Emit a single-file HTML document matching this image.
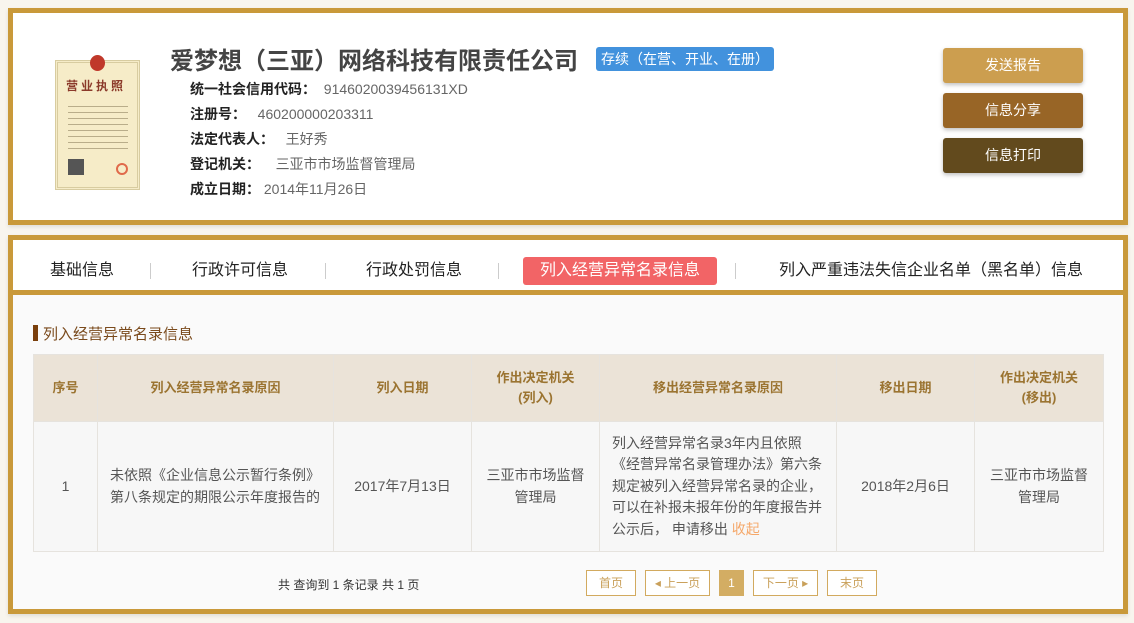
<!DOCTYPE html>
<html><head><meta charset="utf-8"><style>
*{margin:0;padding:0;box-sizing:border-box}
body{width:1134px;height:623px;background:#f8f5ee;font-family:"Liberation Sans","Noto Sans CJK SC",sans-serif;position:relative;overflow:hidden;color:#333}
.abs{position:absolute}
.card1{left:8px;top:8px;width:1120px;height:217px;border:5px solid #c9993a;background:#fff;box-shadow:0 2px 4px rgba(0,0,0,.1)}
.card2{left:8px;top:235px;width:1120px;height:379px;border:5px solid #c9993a;background:#fafafa;box-shadow:0 2px 4px rgba(0,0,0,.1)}
.nav{left:0;top:0;width:1110px;height:55px;background:#fff;border-bottom:5px solid #c9993a}
.tab{position:absolute;top:17px;font-size:16px;line-height:28px;color:#222;white-space:nowrap}
.sep{position:absolute;top:23px;width:1px;height:16px;background:#ccc}
.lbl{position:absolute;left:190px;font-size:14px;font-weight:bold;color:#222;white-space:nowrap}
.val{color:#666;font-weight:normal}
.btn{position:absolute;left:943px;width:140px;height:35px;border-radius:3px;color:#fff;font-size:14px;line-height:35px;text-align:center;box-shadow:0 2px 4px rgba(0,0,0,.25)}
table{position:absolute;left:20px;top:114px;border-collapse:collapse;font-size:14px;table-layout:fixed}
td,th{border:1px solid #e6e3de;text-align:center;padding:0 12px;line-height:21.5px}
th{background:#ebe3d7;color:#9b7431;height:67px;font-weight:bold;font-size:13px;line-height:20px}
td{height:130px;color:#555;background:#f7f7f7}
.pg{position:absolute;top:330px;height:26px;border:1px solid #d2aa5f;color:#c9a05a;font-size:12px;line-height:24px;text-align:center;background:#fff}
</style></head><body>
<div class="abs card1">
 <div class="abs" style="left:42px;top:47px;width:85px;height:130px;background:#f6ecc8;border:3px double #d8cca0">
  <div class="abs" style="left:32px;top:-8px;width:15px;height:16px;border-radius:50%;background:#c0392b"></div>
  <div class="abs" style="left:8px;top:14px;font-size:12px;color:#8b3a2a;letter-spacing:3px;font-weight:bold">营业执照</div>
  <div class="abs" style="left:10px;top:40px;width:60px;height:50px;background:repeating-linear-gradient(#f6ecc8 0 3px,#b9ad8a 3px 4px,#f6ecc8 4px 6px)"></div>
  <div class="abs" style="left:10px;top:96px;width:16px;height:16px;background:#555"></div>
  <div class="abs" style="left:58px;top:100px;width:12px;height:12px;border-radius:50%;border:2px solid #e06a4a"></div>
 </div>
 <div class="abs" style="left:157px;top:28px;font-size:24px;font-weight:bold;color:#444;white-space:nowrap">爱梦想（三亚）网络科技有限责任公司</div>
 <div class="abs" style="left:583px;top:34px;width:178px;height:24px;background:#4292dd;color:#fff;font-size:14px;line-height:24px;padding-left:5px;border-radius:3px;white-space:nowrap">存续（在营、开业、在册）</div>
 <div class="lbl" style="left:177px;top:66px">统一社会信用代码：&nbsp;&nbsp;<span class="val">9146020039456131XD</span></div>
 <div class="lbl" style="left:177px;top:91px">注册号：&nbsp;&nbsp;&nbsp;<span class="val">460200000203311</span></div>
 <div class="lbl" style="left:177px;top:116px">法定代表人：&nbsp;&nbsp;&nbsp;<span class="val">王好秀</span></div>
 <div class="lbl" style="left:177px;top:141px">登记机关：&nbsp;&nbsp;&nbsp;&nbsp;<span class="val">三亚市市场监督管理局</span></div>
 <div class="lbl" style="left:177px;top:166px">成立日期：&nbsp;<span class="val">2014年11月26日</span></div>
 <div class="btn" style="left:930px;top:35px;background:#cc9e4f">发送报告</div>
 <div class="btn" style="left:930px;top:80px;background:#986526">信息分享</div>
 <div class="btn" style="left:930px;top:125px;background:#624a1d">信息打印</div>
</div>
<div class="abs card2">
 <div class="abs nav">
  <div class="tab" style="left:37px">基础信息</div>
  <div class="sep" style="left:137px"></div>
  <div class="tab" style="left:179px">行政许可信息</div>
  <div class="sep" style="left:312px"></div>
  <div class="tab" style="left:353px">行政处罚信息</div>
  <div class="sep" style="left:485px"></div>
  <div class="tab" style="left:510px;top:17px;width:194px;height:28px;background:#f26466;color:#fff;text-align:center;border-radius:3px">列入经营异常名录信息</div>
  <div class="sep" style="left:722px"></div>
  <div class="tab" style="left:766px">列入严重违法失信企业名单（黑名单）信息</div>
 </div>
 <div class="abs" style="left:20px;top:85px;width:5px;height:16px;background:#7a3f0c"></div>
 <div class="abs" style="left:30px;top:83px;font-size:15px;color:#7a4a1c;white-space:nowrap">列入经营异常名录信息</div>
 <table>
  <tr><th style="width:64px">序号</th><th style="width:236px">列入经营异常名录原因</th><th style="width:138px">列入日期</th><th style="width:128px">作出决定机关<br>(列入)</th><th style="width:237px">移出经营异常名录原因</th><th style="width:138px">移出日期</th><th style="width:129px">作出决定机关<br>(移出)</th></tr>
  <tr><td>1</td><td style="text-align:left">未依照《企业信息公示暂行条例》第八条规定的期限公示年度报告的</td><td>2017年7月13日</td><td>三亚市市场监督管理局</td><td style="text-align:left">列入经营异常名录3年内且依照《经营异常名录管理办法》第六条规定被列入经营异常名录的企业，可以在补报未报年份的年度报告并公示后， 申请移出 <span style="color:#f5a86a">收起</span></td><td>2018年2月6日</td><td>三亚市市场监督管理局</td></tr>
 </table>
 <div class="abs" style="left:265px;top:336px;font-size:12px;color:#333;white-space:nowrap">共 查询到 1 条记录 共 1 页</div>
 <div class="pg" style="left:573px;width:50px">首页</div>
 <div class="pg" style="left:632px;width:65px">◂ 上一页</div>
 <div class="pg" style="left:706px;width:25px;background:#d3ad63;border-color:#d3ad63;color:#fff">1</div>
 <div class="pg" style="left:740px;width:65px">下一页 ▸</div>
 <div class="pg" style="left:814px;width:50px">末页</div>
</div>
</body></html>
